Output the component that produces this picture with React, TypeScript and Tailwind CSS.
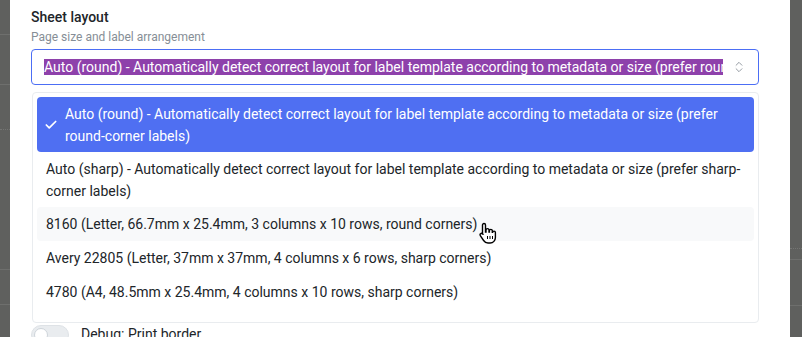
import { ChevronsUpDown, Check } from "lucide-react";

const options = [
  { label: "Auto (round) - Automatically detect correct layout for label template according to metadata or size (prefer round-corner labels)", selected: true, tall: true },
  { label: "Auto (sharp) - Automatically detect correct layout for label template according to metadata or size (prefer sharp-corner labels)", tall: true },
  { label: "8160 (Letter, 66.7mm x 25.4mm, 3 columns x 10 rows, round corners)", hover: true },
  { label: "Avery 22805 (Letter, 37mm x 37mm, 4 columns x 6 rows, sharp corners)" },
  { label: "4780 (A4, 48.5mm x 25.4mm, 4 columns x 10 rows, sharp corners)" },
];

function HandCursor() {
  return (
    <svg width="18" height="22" viewBox="0 0 18 22" className="absolute left-[479px] top-[222px]">
      <path
        d="M5 1.5c.8 0 1.5.7 1.5 1.5v7h.5V8c0-.8.7-1.4 1.5-1.4s1.5.6 1.5 1.4v2h.4V8.8c0-.8.6-1.4 1.4-1.4s1.5.6 1.5 1.4v1.6h.3c0-.8.6-1.3 1.4-1.3s1.4.6 1.4 1.4v5c0 3-2.2 5.5-5.2 5.5H9c-2 0-3.3-.9-4.4-2.5L1.3 13.6c-.5-.7-.3-1.6.4-2 .6-.4 1.5-.2 2 .4L3.5 12V3c0-.8.7-1.5 1.5-1.5z"
        fill="#fff"
        stroke="#000"
        strokeWidth="1.4"
      />
      <path d="M8.5 14v3M11 14v3M13.5 14v3" stroke="#000" strokeWidth="1" />
    </svg>
  );
}

export default function App() {
  return (
    <div
      className="relative w-[802px] h-[337px] overflow-hidden flex bg-[#5f605e]"
      style={{ fontFamily: "Roboto, 'Liberation Sans', sans-serif" }}
    >
      <div className="w-[10px] flex flex-col shrink-0">
        <div className="h-[35px] border-b border-[#6e6f6d]" />
        <div className="h-[50px] border-b border-[#6e6f6d]" />
        <div className="h-[45px] border-b border-dotted border-[#747573]" />
        <div className="h-[140px] border-b border-[#6e6f6d]" />
        <div className="h-[35px] border-b border-[#6e6f6d]" />
      </div>

      <div className="w-[780px] shrink-0 bg-white pl-[21px] pr-[31px] pt-[7px]">
        <div className="text-[14px] leading-[20px] font-medium text-[#212529]">Sheet layout</div>
        <div className="text-[12px] leading-[18px] text-[#868e96] mt-[1px]">Page size and label arrangement</div>

        <div className="mt-[3px] h-[36px] border border-[#4c6ef5] rounded-[4px] flex items-center pl-[12px] pr-[12px]">
          <div className="flex-1 overflow-hidden whitespace-nowrap text-[14px] leading-[16px] text-white">
            <span className="bg-[#8e41ab]">
              Auto (round) - Automatically detect correct layout for label template according to metadata or size (prefer round-corner labels)
            </span>
          </div>
          <ChevronsUpDown size={14} strokeWidth={1.5} className="ml-[9px] text-[#868e96] shrink-0" />
        </div>

        <div className="mt-[7px] ml-[1px] border border-[#e9ecef] rounded-[4px] p-[4px] pb-[13px] bg-white">
          {options.map((o) => (
            <div
              key={o.label}
              className={`flex items-center rounded-[4px] text-[14px] leading-[22px] ${o.tall ? "pt-[6px] pb-[5px]" : "py-[6px]"} ${
                o.selected
                  ? "bg-[#4f6ff2] text-white pl-[8px] pr-[12px]"
                  : o.hover
                  ? "bg-[#f8f9fa] text-[#212529] pl-[9px] pr-[12px]"
                  : "text-[#212529] pl-[9px] pr-[12px]"
              }`}
            >
              {o.selected && <Check size={14} strokeWidth={3} className="mr-[7px] ml-[-1px] shrink-0" />}
              <span>{o.label}</span>
            </div>
          ))}
        </div>

        <div className="mt-[2px] flex items-start">
          <div className="w-[38px] h-[20px] rounded-full bg-[#e9ecef] border border-[#dee2e6] flex items-center pl-[2px]">
            <div className="w-[14px] h-[14px] rounded-full bg-white border border-[#ced4da]" />
          </div>
          <div className="ml-[12px] text-[14px] leading-[20px] text-[#212529] -mt-[1px]">Debug: Print border</div>
        </div>
      </div>

      <div className="flex-1 flex flex-col">
        <div className="h-[249px] border-b border-dotted border-[#747573]" />
        <div className="h-[11px] border-b border-[#6e6f6d]" />
        <div className="h-[46px] border-b border-[#6e6f6d]" />
      </div>

      <HandCursor />
    </div>
  );
}
